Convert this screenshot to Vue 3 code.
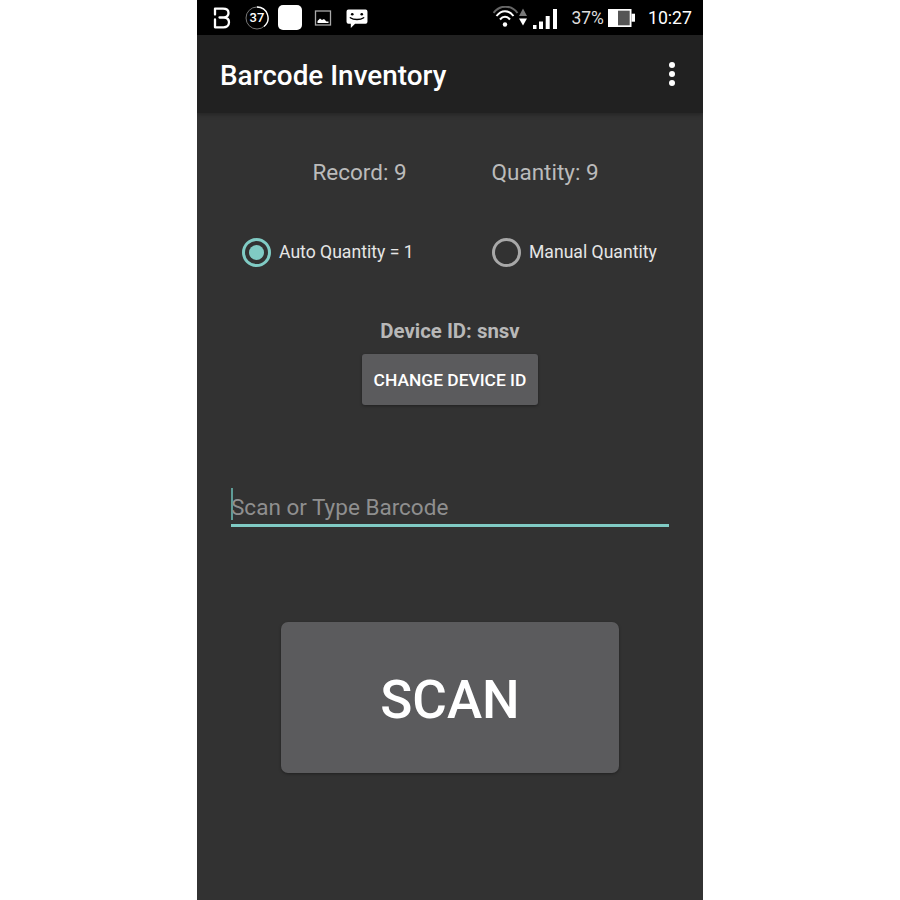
<script setup>
const stats = ['Record: 9', 'Quantity: 9']
</script>

<template>
  <div class="page">
    <div class="phone">
      <div class="statusbar">
        <div class="notif">
          <svg class="ic-b" width="20" height="24" viewBox="0 0 20 24">
            <path d="M3 2.7H11C15 2.7 16.5 5 16.5 7C16.5 9.5 14.5 11 12 11.5C15.5 11.7 17 14 17 16.3C17 19.5 14.5 21.3 11.5 21.3H3V13.5M3 2.7V8.5M7.5 11.5H12" fill="none" stroke="#fff" stroke-width="2.3" stroke-linecap="round" stroke-linejoin="round"/>
          </svg>
          <div class="ring">
            <svg width="24" height="24" viewBox="0 0 24 24" class="ring-svg">
              <circle cx="12" cy="12" r="11" fill="none" stroke="#777" stroke-width="1"/>
              <path d="M12 1A11 11 0 0 1 19 20.5" fill="none" stroke="#fff" stroke-width="1.3"/>
            </svg>
            <span class="ring-text">37</span>
          </div>
          <div class="white-square"></div>
          <svg class="ic-pic" width="18" height="18" viewBox="0 0 18 18">
            <rect x="1.5" y="2" width="15" height="14" fill="none" stroke="#aaa" stroke-width="1.3"/>
            <path d="M3.5 14V12L6 9.5L8 11L10 10L12.5 12.5L14.5 12.5V14Z" fill="#fff"/>
          </svg>
          <svg class="ic-msg" width="22" height="20" viewBox="0 0 23 21">
            <path d="M2.5 0.5H20.5A2 2 0 0 1 22.5 2.5V13.5A2 2 0 0 1 20.5 15.5H9.5L5 20V15.5H2.5A2 2 0 0 1 0.5 13.5V2.5A2 2 0 0 1 2.5 0.5Z" fill="#fff"/>
            <circle cx="6.5" cy="5.5" r="1.4" fill="#000"/>
            <circle cx="16.5" cy="5.5" r="1.4" fill="#000"/>
            <path d="M4.5 9.2C8 11.6 15 11.6 18.5 9.2" fill="none" stroke="#000" stroke-width="1.5" stroke-linecap="round"/>
          </svg>
        </div>
        <div class="system">
          <svg class="ic-wifi" width="34" height="24" viewBox="0 0 34 24">
            <path d="M0.5 7C7 -1.5 18 -1.5 24.5 7" fill="none" stroke="#666" stroke-width="2"/>
            <path d="M3.5 10C8.5 3.5 15.5 3.5 20.5 10" fill="none" stroke="#fff" stroke-width="2"/>
            <path d="M7 13.5C10 9.8 14 9.8 17 13.5" fill="none" stroke="#fff" stroke-width="2"/>
            <circle cx="12" cy="18.5" r="2.2" fill="#fff"/>
            <path d="M26 10L30 2.5L34 10Z" fill="#777"/>
            <path d="M26 12.5L34 12.5L30 19.5Z" fill="#fff"/>
          </svg>
          <svg class="ic-signal" width="24" height="20" viewBox="0 0 24 20">
            <rect x="0" y="16" width="3.5" height="4" fill="#fff"/>
            <rect x="6" y="12.5" width="4" height="7.5" fill="#fff"/>
            <rect x="12.7" y="7" width="4" height="13" fill="#fff"/>
            <rect x="20" y="0" width="4" height="20" fill="#fff"/>
          </svg>
          <span class="pct">37%</span>
          <svg class="ic-batt" width="27" height="18" viewBox="0 0 27 18">
            <rect x="0" y="0" width="23.5" height="18" fill="#fff"/>
            <rect x="10" y="1.7" width="11.7" height="14.6" fill="#555"/>
            <rect x="23.5" y="4.7" width="3.5" height="8" fill="#fff"/>
          </svg>
          <span class="clock">10:27</span>
        </div>
      </div>

      <header class="appbar">
        <h1 class="title">Barcode Inventory</h1>
        <div class="overflow"><i></i><i></i><i></i></div>
      </header>

      <main class="content">
        <div class="stats">
          <span v-for="s in stats" :key="s">{{ s }}</span>
        </div>

        <div class="radios">
          <label class="radio first">
            <span class="circle on"><span class="dot"></span></span>
            <span>Auto Quantity = 1</span>
          </label>
          <label class="radio">
            <span class="circle"></span>
            <span>Manual Quantity</span>
          </label>
        </div>

        <div class="device">Device ID: snsv</div>
        <button class="btn-device" type="button">CHANGE DEVICE ID</button>

        <div class="field">
          <span class="caret"></span>
          <span class="placeholder">Scan or Type Barcode</span>
        </div>

        <button class="btn-scan" type="button">SCAN</button>
      </main>
    </div>
  </div>
</template>

<style scoped>
.page {
  width: 900px;
  height: 900px;
  background: #fff;
  display: flex;
  justify-content: center;
  font-family: Roboto, "Noto Sans", sans-serif;
}
.phone {
  width: 506px;
  height: 900px;
  background: #323232;
  display: flex;
  flex-direction: column;
  overflow: hidden;
}
.statusbar {
  height: 35px;
  flex: none;
  background: #000;
  display: flex;
  justify-content: space-between;
  align-items: center;
  padding: 0 11px 0 15px;
}
.notif, .system {
  display: flex;
  align-items: center;
}
.ic-b { margin-right: 13px; }
.ring {
  width: 24px;
  height: 24px;
  display: flex;
  align-items: center;
  justify-content: center;
  position: relative;
  margin-right: 9px;
}
.ring-svg { position: absolute; left: 0; top: 0; }
.ring-text {
  color: #fff;
  font-size: 13px;
  font-weight: 500;
}
.white-square {
  width: 24px;
  height: 25px;
  background: #fff;
  border-radius: 5px;
  margin-right: 12px;
}
.ic-pic { margin-right: 14px; }
.ic-msg { margin-top: 2px; }
.ic-wifi { margin-right: 6px; }
.ic-signal { margin-right: 14px; margin-top: 3px; }
.pct {
  color: #ddd;
  font-size: 17.5px;
  margin-right: 4px;
}
.ic-batt { margin-right: 13px; }
.clock {
  color: #fff;
  font-size: 17.7px;
}
.appbar {
  height: 78px;
  flex: none;
  background: #212121;
  box-shadow: 0 2px 4px rgba(0, 0, 0, 0.25);
  display: flex;
  align-items: center;
  justify-content: space-between;
  padding: 0 28px 0 23px;
  position: relative;
}
.title {
  margin: 0;
  color: #fff;
  font-size: 27.9px;
  font-weight: 500;
  line-height: 1;
  position: relative;
  top: 2px;
}
.overflow {
  display: flex;
  flex-direction: column;
  gap: 3px;
}
.overflow i {
  width: 6px;
  height: 6px;
  border-radius: 50%;
  background: #fff;
  display: block;
}
.content {
  flex: 1;
  display: flex;
  flex-direction: column;
  align-items: center;
}
.stats {
  display: flex;
  gap: 85px;
  margin-top: 45px;
  color: #bbb;
  font-size: 22.5px;
  line-height: 28px;
  padding-left: 11px;
}
.radios {
  align-self: stretch;
  display: flex;
  padding-left: 45px;
  margin-top: 51px;
}
.radio {
  display: flex;
  align-items: center;
  gap: 8px;
  color: #e6e6e6;
  font-size: 17.6px;
  height: 30px;
}
.radio.first { width: 250px; }
.circle {
  width: 29px;
  height: 29px;
  box-sizing: border-box;
  border: 3px solid #a8a8a8;
  border-radius: 50%;
  display: flex;
  align-items: center;
  justify-content: center;
  flex: none;
}
.circle.on { border-color: #80cbc4; }
.dot {
  width: 15px;
  height: 15px;
  border-radius: 50%;
  background: #80cbc4;
}
.device {
  margin-top: 51px;
  color: #b8b8b8;
  font-size: 20.4px;
  font-weight: 700;
  line-height: 26px;
}
.btn-device {
  margin-top: 10px;
  width: 176px;
  height: 51px;
  background: #5b5b5d;
  color: #fff;
  border: 0;
  border-radius: 3px;
  box-shadow: 0 1px 3px rgba(0, 0, 0, 0.35);
  font-family: inherit;
  font-size: 17.4px;
  font-weight: 500;
  padding: 0;
}
.field {
  align-self: stretch;
  margin: 80px 34px 0;
  height: 39px;
  border-bottom: 3px solid #80cbc4;
  position: relative;
  display: flex;
  align-items: center;
}
.caret {
  position: absolute;
  left: 0;
  top: 3px;
  width: 2px;
  height: 32px;
  background: #5e9c97;
}
.placeholder {
  color: #8f8f8f;
  font-size: 22.5px;
  position: relative;
  top: 2px;
}
.btn-scan {
  margin-top: 95px;
  width: 338px;
  height: 151px;
  background: #5b5b5d;
  color: #fff;
  border: 0;
  border-radius: 7px;
  box-shadow: 0 1px 3px rgba(0, 0, 0, 0.35);
  font-family: inherit;
  font-size: 53px;
  font-weight: 500;
  padding: 4px 0 0;
}
</style>
